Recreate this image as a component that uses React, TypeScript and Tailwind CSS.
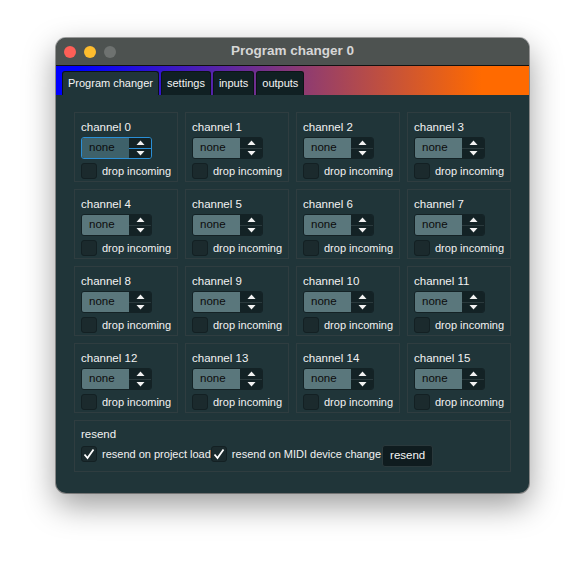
import React from "react";

const font = { fontFamily: '"Liberation Sans", Arial, sans-serif' };

const Arrow = ({ up }: { up?: boolean }) => (
  <svg width="9" height="5" viewBox="0 0 9 5">
    <path d={up ? "M0.5 5 L4.5 0.5 L8.5 5 Z" : "M0.5 0 L4.5 4.5 L8.5 0 Z"} fill="#f2f2f2" />
  </svg>
);

const SpinBox = ({ focused }: { focused?: boolean }) => (
  <div
    className={`flex w-[71px] h-[22px] rounded-[3px] border overflow-hidden ${
      focused ? "border-[#2a8fd6]" : "border-[#142225]"
    }`}
  >
    <div
      className={`flex-1 flex items-center pl-[7px] text-[11.5px] text-[#0c0c0c] ${
        focused ? "bg-[#3e616a]" : "bg-[#5a777c]"
      }`}
    >
      none
    </div>
    <div className="w-[22px] flex flex-col bg-[#132225]">
      <div className={`flex-1 flex items-center justify-center border-b ${focused ? "border-[#2a8fd6]" : "border-[#2b3a3d]"}`}>
        <Arrow up />
      </div>
      <div className="flex-1 flex items-center justify-center">
        <Arrow />
      </div>
    </div>
  </div>
);

const CheckBox = ({ checked }: { checked?: boolean }) => (
  <div className="shrink-0 w-[16px] h-[16px] rounded-[3px] bg-[#1b2a2d] border border-[#132023] flex items-center justify-center">
    {checked && (
      <svg width="12" height="12" viewBox="0 0 12 12">
        <path d="M1.5 6.5 L4.5 10 L10.5 1.5" stroke="#ffffff" strokeWidth="1.8" fill="none" />
      </svg>
    )}
  </div>
);

const Channel = ({ n }: { n: number }) => (
  <div className="h-[70px] border border-[#2f3d40] px-[6px] pt-[7px] flex flex-col">
    <div className="text-[11.5px] leading-[15px] text-[#f2f2f2] whitespace-nowrap">channel {n}</div>
    <div className="mt-[2px]">
      <SpinBox focused={n === 0} />
    </div>
    <div className="mt-[4px] flex items-center gap-[5px]">
      <CheckBox />
      <span className="text-[11px] text-[#f2f2f2] whitespace-nowrap">drop incoming</span>
    </div>
  </div>
);

const tabs = ["Program changer", "settings", "inputs", "outputs"];

export default function App() {
  return (
    <div className="w-[586px] h-[566px] bg-white pt-[38px] pl-[56px]" style={font}>
      <div className="w-[473px] h-[455px] rounded-[10px] overflow-hidden bg-[#203539] flex flex-col shadow-[0_12px_32px_rgba(0,0,0,0.4),0_0_0_1px_rgba(0,0,0,0.35)]">
        <div className="h-[28px] bg-[#4d5250] relative flex items-center justify-center border-b border-[#111]">
          <div className="absolute left-[8px] top-[8px] flex gap-[8px]">
            <div className="w-[12px] h-[12px] rounded-full bg-[#fe5f57]" />
            <div className="w-[12px] h-[12px] rounded-full bg-[#febc2e]" />
            <div className="w-[12px] h-[12px] rounded-full bg-[#6e7270]" />
          </div>
          <span className="text-[13.5px] font-bold text-[#d6d6d6]">Program changer 0</span>
        </div>
        <div className="h-[29px] flex items-end pl-[6px] gap-[2px] bg-[linear-gradient(to_right,#0000ff_5%,#ff6a00_90%)]">
          {tabs.map((t, i) => (
            <div
              key={t}
              className={`h-[24px] px-[5px] flex items-center rounded-t-[3px] border border-b-0 border-[#0b1416] text-[11px] text-[#f4f4f4] whitespace-nowrap ${
                i === 0 ? "bg-[#203539]" : "bg-[#102023]"
              }`}
            >
              {t}
            </div>
          ))}
        </div>
        <div className="flex-1 px-[18px] pt-[17px] flex flex-col gap-[7px]">
          <div className="grid grid-cols-4 gap-[7px]">
            {Array.from({ length: 16 }, (_, i) => (
              <Channel key={i} n={i} />
            ))}
          </div>
          <div className="h-[52px] border border-[#2f3d40] px-[6px] pt-[6px]">
            <div className="text-[11.5px] leading-[15px] text-[#f2f2f2]">resend</div>
            <div className="mt-[4px] flex items-start whitespace-nowrap">
              <CheckBox checked />
              <span className="ml-[5px] leading-[16px] text-[11px] text-[#f2f2f2]">resend on project load</span>
              <CheckBox checked />
              <span className="ml-[5px] leading-[16px] text-[11px] text-[#f2f2f2]">resend on MIDI device change</span>
              <div className="ml-[1px] -mt-[1px] h-[22px] px-[7px] flex items-center rounded-[3px] bg-[#0f1c1f] border border-[#2a393c] text-[11.5px] text-[#f4f4f4]">
                resend
              </div>
            </div>
          </div>
        </div>
      </div>
    </div>
  );
}
